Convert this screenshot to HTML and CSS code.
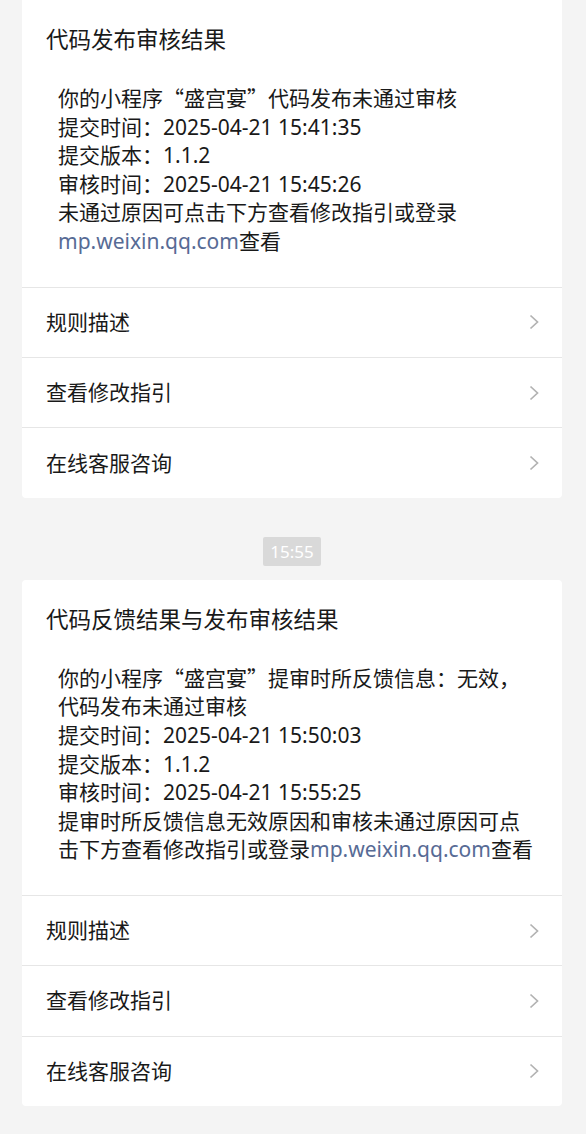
FILE: index.html
```html
<!DOCTYPE html>
<html lang="zh-CN">
<head>
<meta charset="UTF-8">
<meta name="viewport" content="width=device-width, initial-scale=1.0">
<title>代码发布审核结果</title>
<link rel="stylesheet" href="styles.css">
</head>
<body>
    <div class="page">
        <!-- 第一条通知 -->
        <div class="card card-first">
            <div class="card-title">代码发布审核结果</div>
            <div class="card-body">
                <p>你的小程序<span class="cjk">“</span>盛宫宴<span class="cjk">”</span>代码发布未通过审核</p>
                <p>提交时间：2025-04-21 15:41:35</p>
                <p>提交版本：1.1.2</p>
                <p>审核时间：2025-04-21 15:45:26</p>
                <p>未通过原因可点击下方查看修改指引或登录<a class="link">mp.weixin.qq.com</a>查看</p>
            </div>
            <div class="menu">
                <div class="menu-item"><span>规则描述</span><svg class="arrow" width="10" height="16" viewBox="0 0 10 16"><polyline points="1.5,1.5 8.5,8 1.5,14.5" /></svg></div>
                <div class="menu-item"><span>查看修改指引</span><svg class="arrow" width="10" height="16" viewBox="0 0 10 16"><polyline points="1.5,1.5 8.5,8 1.5,14.5" /></svg></div>
                <div class="menu-item"><span>在线客服咨询</span><svg class="arrow" width="10" height="16" viewBox="0 0 10 16"><polyline points="1.5,1.5 8.5,8 1.5,14.5" /></svg></div>
            </div>
        </div>

        <div class="time-row"><span class="time">15:55</span></div>

        <!-- 第二条通知 -->
        <div class="card">
            <div class="card-title">代码反馈结果与发布审核结果</div>
            <div class="card-body">
                <p>你的小程序<span class="cjk">“</span>盛宫宴<span class="cjk">”</span>提审时所反馈信息：无效，代码发布未通过审核</p>
                <p>提交时间：2025-04-21 15:50:03</p>
                <p>提交版本：1.1.2</p>
                <p>审核时间：2025-04-21 15:55:25</p>
                <p>提审时所反馈信息无效原因和审核未通过原因可点击下方查看修改指引或登录<a class="link">mp.weixin.qq.com</a>查看</p>
            </div>
            <div class="menu">
                <div class="menu-item"><span>规则描述</span><svg class="arrow" width="10" height="16" viewBox="0 0 10 16"><polyline points="1.5,1.5 8.5,8 1.5,14.5" /></svg></div>
                <div class="menu-item"><span>查看修改指引</span><svg class="arrow" width="10" height="16" viewBox="0 0 10 16"><polyline points="1.5,1.5 8.5,8 1.5,14.5" /></svg></div>
                <div class="menu-item"><span>在线客服咨询</span><svg class="arrow" width="10" height="16" viewBox="0 0 10 16"><polyline points="1.5,1.5 8.5,8 1.5,14.5" /></svg></div>
            </div>
        </div>
    </div>
</body>
</html>
```

FILE: styles.css
```css
body {
    margin: 0;
    background: #f4f4f4;
    font-family: "Noto Sans", "Noto Sans CJK SC", sans-serif;
    color: #191919;
}

.page {
    padding: 0 24px 0 22px;
}

.card {
    background: #fff;
    border-radius: 4px;
}

.card-first {
    border-radius: 0 0 4px 4px;
}

.card-title {
    padding: 25px 24px 0;
    font-size: 22.5px;
    line-height: 30px;
}

.card-body {
    padding: 28px 24px 31px 36px;
    font-size: 21px;
    line-height: 28.6px;
}

.card-body p {
    margin: 0;
}

.cjk {
    font-family: "Noto Sans CJK SC", sans-serif;
}

.link {
    color: #576b95;
}

.menu-item {
    display: flex;
    align-items: center;
    justify-content: space-between;
    height: 70.4px;
    padding: 0 23px 3px 24px;
    border-top: 1px solid #e6e6e6;
    font-size: 21px;
    box-sizing: border-box;
}

.arrow {
    margin-top: 3px;
}

.arrow polyline {
    fill: none;
    stroke: #b2b2b2;
    stroke-width: 1.7;
}

.time-row {
    display: flex;
    justify-content: center;
    padding: 39px 0 14px;
}

.time {
    background: #d9d9d9;
    color: #fff;
    font-size: 17px;
    line-height: 29px;
    padding: 0 7px;
    border-radius: 2px;
}
```
